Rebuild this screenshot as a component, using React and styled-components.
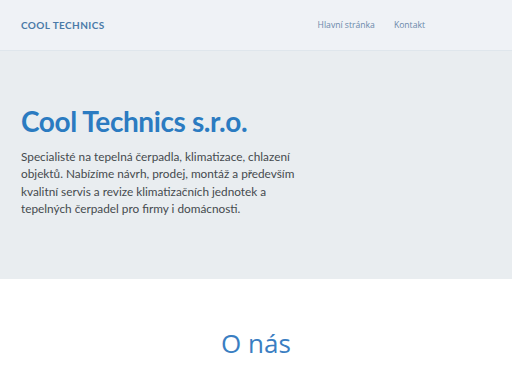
import React from "react";
import styled, { createGlobalStyle } from "styled-components";

const Global = createGlobalStyle`
  html, body { margin: 0; padding: 0; background: #ffffff; }
  body { font-family: "Lato", "Open Sans", sans-serif; }
  * { box-sizing: border-box; }
`;

const Header = styled.header`
  height: 51px;
  background: #eff2f6;
  border-bottom: 1px solid #dfe6ec;
  display: flex;
  align-items: center;
  justify-content: space-between;
  padding: 0 21px;
`;

const Brand = styled.div`
  font-family: "Lato", sans-serif;
  font-weight: 700;
  font-size: 10px;
  letter-spacing: 0.4px;
  color: #4a7aa8;
`;

const Nav = styled.nav`
  display: flex;
  gap: 19px;
  margin-right: 66px;
`;

const NavLink = styled.a`
  font-family: "Open Sans", sans-serif;
  font-size: 8.6px;
  color: #6a88aa;
  text-decoration: none;
`;

const Hero = styled.section`
  background: #e9edf0;
  height: 228px;
  padding: 50px 21px 0;
`;

const Title = styled.h1`
  margin: 0;
  font-family: "Lato", sans-serif;
  font-weight: 700;
  font-size: 28px;
  letter-spacing: -0.4px;
  line-height: 40px;
  color: #2b7bc1;
`;

const Lead = styled.p`
  margin: 7px 0 0;
  width: 290px;
  font-family: "Lato", sans-serif;
  font-size: 11.8px;
  line-height: 17.4px;
  color: #454a4e;
`;

const About = styled.section`
  display: flex;
  justify-content: center;
  padding-top: 46px;
`;

const AboutTitle = styled.h2`
  margin: 0;
  font-family: "Open Sans", sans-serif;
  font-weight: 500;
  font-size: 26px;
  color: #3a7ec2;
`;

export default function App() {
  return (
    <>
      <Global />
      <Header>
        <Brand>COOL TECHNICS</Brand>
        <Nav>
          <NavLink href="#">Hlavní stránka</NavLink>
          <NavLink href="#">Kontakt</NavLink>
        </Nav>
      </Header>
      <Hero>
        <Title>Cool Technics s.r.o.</Title>
        <Lead>
          Specialisté na tepelná čerpadla, klimatizace, chlazení objektů. Nabízíme
          návrh, prodej, montáž a především kvalitní servis a revize
          klimatizačních jednotek a tepelných čerpadel pro firmy i domácnosti.
        </Lead>
      </Hero>
      <About>
        <AboutTitle>O nás</AboutTitle>
      </About>
    </>
  );
}
